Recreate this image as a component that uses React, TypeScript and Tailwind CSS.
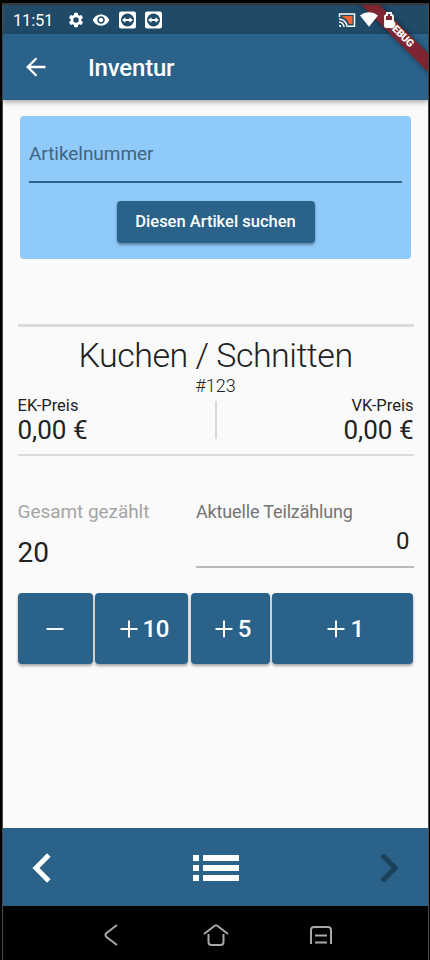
import type { ReactNode } from "react";

function StatusBar() {
  return (
    <div className="flex h-[29px] items-center bg-[#1f4a68] pl-[10px] text-white">
      <span className="w-[54px] pt-[3px] text-[16.500px] leading-none tracking-[-0.200px]">11:51</span>
      <svg className="h-[18px] w-[18px]" viewBox="0 0 24 24" fill="currentColor">
        <path d="M19.140 12.940c.04-.3.06-.61.06-.94 0-.32-.02-.64-.07-.94l2.030-1.580a.49.49 0 0 0 .12-.61l-1.920-3.320a.488.488 0 0 0-.59-.22l-2.390.96c-.5-.38-1.030-.7-1.620-.94l-.36-2.540a.484.484 0 0 0-.48-.41h-3.840c-.24 0-.43.17-.47.41l-.36 2.540c-.59.24-1.130.57-1.620.94l-2.390-.96c-.22-.08-.47 0-.59.22L2.740 8.870c-.12.21-.08.47.12.61l2.030 1.580c-.05.3-.09.63-.09.94s.02.64.07.94l-2.030 1.580a.49.49 0 0 0-.12.61l1.920 3.320c.12.22.37.29.59.22l2.390-.96c.5.38 1.030.7 1.620.94l.36 2.540c.05.24.24.41.48.41h3.840c.24 0 .44-.17.47-.41l.36-2.540c.59-.24 1.130-.56 1.620-.94l2.390.96c.22.08.47 0 .59-.22l1.920-3.320c.12-.22.07-.47-.12-.61l-2.010-1.580zM12 15.600A3.600 3.600 0 1 1 12 8.400a3.600 3.600 0 0 1 0 7.200z" />
      </svg>
      <svg className="ml-[7px] h-[18px] w-[18px]" viewBox="0 0 24 24" fill="currentColor">
        <path d="M12 4.500C7 4.500 2.730 7.610 1 12c1.730 4.390 6 7.500 11 7.500s9.270-3.110 11-7.500c-1.730-4.390-6-7.500-11-7.500zM12 17c-2.760 0-5-2.240-5-5s2.240-5 5-5 5 2.240 5 5-2.240 5-5 5zm0-8c-1.660 0-3 1.340-3 3s1.340 3 3 3 3-1.340 3-3-1.340-3-3-3z" />
      </svg>
      <RemoteIcon />
      <RemoteIcon />
      <svg className="ml-auto h-[16px] w-[18px]" viewBox="0 0 18 16" fill="none" stroke="currentColor" strokeWidth="1.500">
        <path d="M1.500 5V2h15v12.200H10" />
        <path d="M4.500 4h10v8H11c-.8-3.500-3-6-6.500-6.800z" fill="#f26430" stroke="none" />
        <path d="M1 7a8 8 0 0 1 8 8M1 10a5 5 0 0 1 5 5M1 13.500a1.500 1.500 0 0 1 1.500 1.500" />
      </svg>
      <svg className="relative z-30 ml-[4px] h-[15px] w-[18px]" viewBox="0 0 18 15" fill="currentColor">
        <path d="M9 14.800 0 3.500C5-1 13-1 18 3.500z" />
      </svg>
      <svg className="relative z-30 ml-[6px] mr-[34px] h-[16px] w-[10px]" viewBox="0 0 10 16" fill="none">
        <path d="M1 4.500q0-1.500 2-1.500V1h4v2q2 0 2 1.500V14q0 1-1 1H2q-1 0-1-1z" stroke="currentColor" strokeWidth="1.800" />
        <rect x="1" y="8" width="8" height="7" fill="currentColor" />
      </svg>
    </div>
  );
}

function RemoteIcon() {
  return (
    <svg className="ml-[8px] h-[18px] w-[18px]" viewBox="0 0 18 18">
      <rect x="1" y="0.500" width="17" height="17" rx="2" fill="#fff" />
      <circle cx="9.500" cy="9" r="6.500" fill="#1f4a68" />
      <path d="m4 9 3.500-2.800v1.900h4V6.200L15 9l-3.500 2.800V9.900h-4v1.900z" fill="#fff" />
    </svg>
  );
}

function DebugBanner() {
  return (
    <div className="pointer-events-none absolute right-0 top-0 z-20 h-[80px] w-[80px] overflow-hidden">
      <div className="absolute left-[-4px] top-[23px] flex h-[13px] w-[112px] rotate-45 items-center justify-center bg-[#7d2531] text-[10.500px] font-black leading-none tracking-[-0.300px] text-white shadow-[0_0_5px_rgba(0,0,0,0.5)]">
        DEBUG
      </div>
    </div>
  );
}

function CountButton({ label, className }: { label?: string; className: string }) {
  return (
    <button
      className={`flex h-[71px] items-center justify-center rounded-[4px] bg-[#2a6289] text-[24px] font-medium tracking-[-0.500px] text-white shadow-[0_2px_3px_rgba(0,0,0,0.35)] ${className}`}
    >
      <svg className="h-[18px] w-[18px]" viewBox="0 0 18 18" stroke="currentColor" strokeWidth="1.900">
        <path d={label ? "M.5 9h17M9 .5v17" : "M.5 9h17"} />
      </svg>
      {label && <span className="ml-[5px] pt-[1px] leading-none">{label}</span>}
    </button>
  );
}

function Price({ title, children, className = "" }: { title: string; children: ReactNode; className?: string }) {
  return (
    <div className={className}>
      <div className="text-[16.500px] leading-[18px]">{title}</div>
      <div className="text-[26px] leading-[30px]">{children}</div>
    </div>
  );
}

export default function App() {
  return (
    <div className="h-[960px] w-[430px] overflow-hidden bg-black pl-[2px] pr-[1px] pt-[3px] font-[Roboto,sans-serif]">
      <div className="relative flex h-full flex-col border-x border-t-2 border-[#4a4a4a] border-t-[#383838] bg-[#fafafa] text-[#222]">
        <StatusBar />

        {/* App bar */}
        <header className="z-10 flex h-[66px] shrink-0 items-center bg-[#2a6289] text-white shadow-[0_2px_5px_rgba(0,0,0,0.35)]">
          <svg className="ml-[23px] h-[20px] w-[20px]" viewBox="0 0 20 20" fill="none" stroke="currentColor" strokeWidth="2.300">
            <path d="M19.500 10H2M10.500 1.200 1.700 10l8.800 8.800" />
          </svg>
          <h1 className="ml-[42px] pt-[1px] text-[24px] font-medium leading-none tracking-[-0.200px]">Inventur</h1>
        </header>
        <DebugBanner />

        <main className="flex-1 px-[14.500px] pt-[16px]">
          {/* Search */}
          <section className="ml-[2.500px] mr-[2.500px] flex h-[143px] flex-col items-center rounded-[4px] bg-[#90caf9] px-[9px]">
            <div className="h-[67px] w-full border-b-[2.500px] border-[#2a6289] pt-[27px] text-[19px] leading-[22px] tracking-[-0.050px] text-[#3f6481]">
              Artikelnummer
            </div>
            <button className="mt-[18px] h-[42px] w-[198px] rounded-[4px] bg-[#2a6289] pt-[1px] text-[16.500px] font-medium text-white shadow-[0_2px_3px_rgba(0,0,0,0.35)]">
              Diesen Artikel suchen
            </button>
          </section>

          {/* Article */}
          <section className="mt-[65px] h-[132px] border-b-2 border-t-[3px] border-[#dadada]">
            <h2 className="pt-[7px] text-center text-[34px] font-light leading-[42px] tracking-[-0.500px]">Kuchen / Schnitten</h2>
            <div className="text-center text-[18px] font-light leading-[20px]">#123</div>
            <div className="flex justify-between pt-[1px]">
              <Price title="EK-Preis">0,00 €</Price>
              <div className="mt-[4px] h-[38px] w-[2px] bg-[#d8d8d8]" />
              <Price title="VK-Preis" className="text-right">0,00 €</Price>
            </div>
          </section>

          {/* Counting */}
          <section className="mt-[43px] flex h-[69px]">
            <div className="w-[178.500px] pt-[1px]">
              <div className="text-[19px] leading-[24px] tracking-[-0.050px] text-[#a5a5a5]">Gesamt gezählt</div>
              <div className="mt-[13px] text-[28px] leading-[32px]">20</div>
            </div>
            <div className="flex-1 border-b-2 border-[#b9b9b9] pt-[1px]">
              <div className="text-[18px] leading-[24px] tracking-[-0.150px] text-[#747474]">Aktuelle Teilzählung</div>
              <div className="pr-[4px] pt-[1px] text-right text-[24px] leading-[32px]">0</div>
            </div>
          </section>
          <div className="mt-[25px] flex justify-between">
            <CountButton className="w-[75px]" />
            <CountButton label="10" className="w-[93px] pl-[5px]" />
            <CountButton label="5" className="w-[79px] pl-[5px]" />
            <CountButton label="1" className="w-[141px] pl-[5px]" />
          </div>
        </main>

        {/* Article navigation */}
        <footer className="flex h-[78px] shrink-0 items-center justify-between bg-[#2a6289] px-[29px] pt-[1px] text-white">
          <svg className="h-[30px] w-[19px]" viewBox="0 0 19 30" fill="none" stroke="currentColor" strokeWidth="5">
            <path d="M16.800 2 4 15l12.800 13" />
          </svg>
          <svg className="h-[26px] w-[46px]" viewBox="0 0 46 26" fill="currentColor">
            <path d="M0 0h6v6H0zM10 0h36v6H10zM0 10h6v6H0zM10 10h36v6H10zM0 20h6v6H0zM10 20h36v6H10z" />
          </svg>
          <svg className="h-[30px] w-[19px]" viewBox="0 0 19 30" fill="none" stroke="#1b4158" strokeWidth="5">
            <path d="m2.200 2 12.800 13-12.800 13" />
          </svg>
        </footer>

        {/* System navigation */}
        <nav className="flex h-[54px] shrink-0 items-center bg-black pl-[101px] pt-[3px] text-[#a8a8a8]">
          <svg className="h-[22px] w-[14px]" viewBox="0 0 14 22" fill="none" stroke="currentColor" strokeWidth="2">
            <path d="M13 1 2.500 9q-2 2 0 4L13 21" />
          </svg>
          <svg className="ml-[85px] h-[22px] w-[26px]" viewBox="0 0 26 22" fill="none" stroke="currentColor" strokeWidth="2">
            <path d="M1 10 12 1.500q1-.7 2 0L25 10M5.500 10v8q0 3 3 3h9q3 0 3-3v-8" />
          </svg>
          <svg className="ml-[81px] h-[18px] w-[22px]" viewBox="0 0 22 18" fill="none" stroke="currentColor" strokeWidth="2">
            <path d="M1 18V4q0-3 3-3h14q3 0 3 3v14M5 9.500h12M5 16.500h12" />
          </svg>
        </nav>
      </div>
    </div>
  );
}
